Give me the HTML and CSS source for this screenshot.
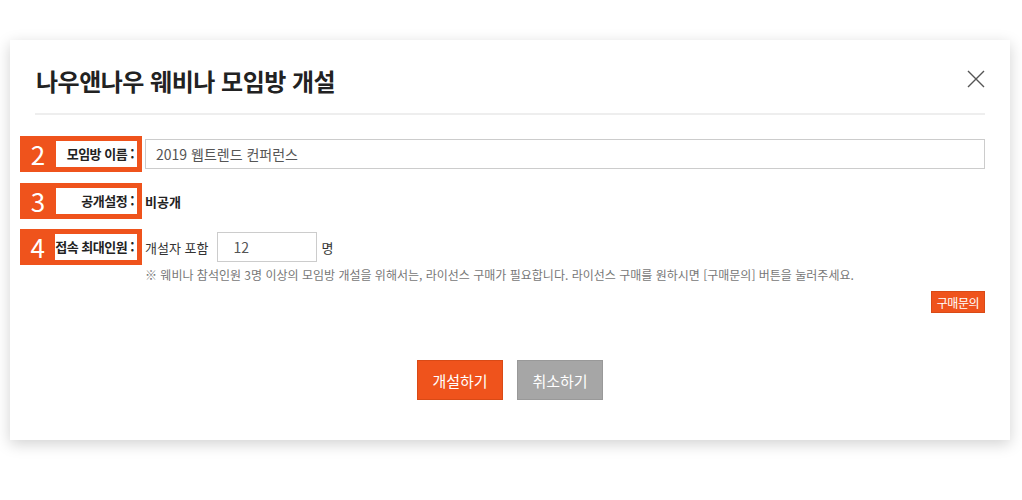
FILE: index.html
```html
<!DOCTYPE html>
<html lang="ko">
<head>
    <meta charset="UTF-8">
    <meta name="viewport" content="width=device-width, initial-scale=1.0">
    <title>웨비나 모임방 개설</title>
    <link rel="stylesheet" href="styles.css">
</head>
<body>
    <div class="modal">
        <div class="modal-header">
            <h1>나우앤나우 웨비나 모임방 개설</h1>
            <button class="close-btn" type="button" aria-label="닫기">
                <svg width="18" height="18" viewBox="0 0 18 18">
                    <path d="M1 1 L17 17 M17 1 L1 17" stroke="#555" stroke-width="1.4" fill="none"/>
                </svg>
            </button>
        </div>

        <div class="form">
            <div class="row">
                <div class="tag"><span class="num">2</span><span class="label">모임방 이름 :</span></div>
                <input class="text-input wide" type="text" value="2019 웹트렌드 컨퍼런스">
            </div>
            <div class="row">
                <div class="tag"><span class="num">3</span><span class="label">공개설정 :</span></div>
                <span class="value">비공개</span>
            </div>
            <div class="row">
                <div class="tag"><span class="num">4</span><span class="label">접속 최대인원 :</span></div>
                <span class="plain">개설자 포함</span>
                <input class="text-input small" type="text" value="12">
                <span class="plain">명</span>
            </div>
            <p class="note">※ 웨비나 참석인원 3명 이상의 모임방 개설을 위해서는, 라이선스 구매가 필요합니다. 라이선스 구매를 원하시면 [구매문의] 버튼을 눌러주세요.</p>
            <div class="inquiry">
                <button class="inquiry-btn" type="button">구매문의</button>
            </div>
        </div>

        <div class="actions">
            <button class="btn btn-primary" type="button">개설하기</button>
            <button class="btn btn-cancel" type="button">취소하기</button>
        </div>
    </div>
</body>
</html>
```

FILE: styles.css
```css
html, body {
    min-height: 100%;
}

body {
    margin: 0;
    padding: 40px 0 60px;
    background: #fff;
    font-family: 'Noto Sans CJK KR', 'Noto Sans', sans-serif;
    color: #333;
}

.modal {
    width: 1000px;
    height: 400px;
    margin-left: 10px;
    background: #fff;
    box-shadow: 0 4px 14px rgba(0,0,0,0.18);
    box-sizing: border-box;
}

.modal-header {
    display: flex;
    justify-content: space-between;
    align-items: center;
    margin: 0 25px;
    padding: 23px 0 14px 1px;
    border-bottom: 2px solid #eee;
}

.modal-header h1 {
    margin: 0;
    font-size: 24px;
    line-height: 36px;
    font-weight: bold;
    color: #222;
    letter-spacing: -0.5px;
}

.close-btn {
    border: 0;
    background: none;
    padding: 0;
    width: 18px;
    height: 18px;
    margin-top: -4px;
    cursor: pointer;
}

.close-btn svg {
    display: block;
}

.form {
    padding: 21px 25px 0 10px;
}

.row {
    display: flex;
    align-items: center;
    height: 36px;
    margin-bottom: 10px;
}

.row:first-child {
    margin-bottom: 11px;
}

.tag {
    display: flex;
    align-items: center;
    width: 122px;
    height: 36px;
    padding: 5px 5px 5px 0;
    box-sizing: border-box;
    background: #ef531c;
    margin-right: 3px;
    flex-shrink: 0;
}

.tag .num {
    width: 36px;
    text-align: center;
    color: #fff;
    font-size: 26px;
    line-height: 26px;
}

.tag .label {
    flex: 1;
    height: 26px;
    line-height: 26px;
    background: #fff;
    text-align: right;
    padding-right: 3px;
    font-size: 13px;
    font-weight: bold;
    color: #222;
    letter-spacing: -0.5px;
    white-space: nowrap;
}

.text-input {
    height: 30px;
    box-sizing: border-box;
    border: 1px solid #ccc;
    font-family: inherit;
    font-size: 14px;
    color: #555;
    outline: none;
}

.text-input.wide {
    flex: 1;
    padding: 0 10px;
}

.text-input.small {
    width: 100px;
    padding: 0 15px;
    margin: 0 4px 0 9px;
}

.value {
    font-size: 13px;
    font-weight: bold;
    color: #222;
}

.plain {
    font-size: 13px;
    color: #333;
}

.note {
    margin: -10px 0 0 125px;
    font-size: 12px;
    line-height: 20px;
    color: #777;
}

.inquiry {
    display: flex;
    justify-content: flex-end;
    margin-top: 6px;
}

.inquiry-btn {
    height: 22px;
    padding: 0 5px;
    border: 1px solid #d94a16;
    background: #ef531c;
    color: #fff;
    font-family: inherit;
    font-size: 12px;
    line-height: 19px;
    letter-spacing: -0.5px;
}

.actions {
    display: flex;
    justify-content: center;
    gap: 14px;
    margin-top: 47px;
}

.btn {
    width: 86px;
    height: 40px;
    font-family: inherit;
    font-size: 15px;
    color: #fff;
    cursor: pointer;
}

.btn-primary {
    background: #ef531c;
    border: 1px solid #d94a16;
}

.btn-cancel {
    background: #a6a6a6;
    border: 1px solid #999;
}
```
